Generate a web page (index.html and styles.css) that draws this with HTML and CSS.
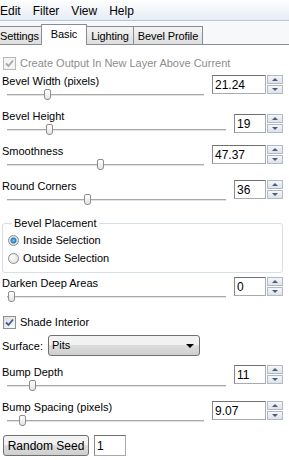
FILE: index.html
```html
<!DOCTYPE html>
<html lang="en">
<head>
  <meta charset="UTF-8" />
  <title>Bevel</title>
  <link rel="stylesheet" href="styles.css">
</head>
<body>
  <div class="menubar">
    <span>Edit</span>
    <span>Filter</span>
    <span>View</span>
    <span>Help</span>
  </div>

  <div class="tabs">
    <div class="tab t-settings">Settings</div>
    <div class="tab active t-basic">Basic</div>
    <div class="tab t-lighting">Lighting</div>
    <div class="tab t-profile">Bevel Profile</div>
  </div>

  <div class="panel">
    <div class="check-row disabled">
      <span class="box checked"><svg viewBox="0 0 9 9"><path d="M1 4.5 L3.5 7 L8 1.5" /></svg></span>
      Create Output In New Layer Above Current
    </div>

    <div class="field">
      <div class="field-main">
        <div class="label">Bevel Width (pixels)</div>
        <div class="track"><span class="thumb" style="left:37px"></span></div>
      </div>
      <div class="spin"><input class="num wide" value="21.24"><span class="arrows"><b class="up"></b><b class="down"></b></span></div>
    </div>

    <div class="field">
      <div class="field-main">
        <div class="label">Bevel Height</div>
        <div class="track"><span class="thumb" style="left:39px"></span></div>
      </div>
      <div class="spin low"><input class="num" value="19"><span class="arrows"><b class="up"></b><b class="down"></b></span></div>
    </div>

    <div class="field">
      <div class="field-main">
        <div class="label">Smoothness</div>
        <div class="track"><span class="thumb" style="left:90px"></span></div>
      </div>
      <div class="spin"><input class="num wide" value="47.37"><span class="arrows"><b class="up"></b><b class="down"></b></span></div>
    </div>

    <div class="field">
      <div class="field-main">
        <div class="label">Round Corners</div>
        <div class="track"><span class="thumb" style="left:77px"></span></div>
      </div>
      <div class="spin"><input class="num" value="36"><span class="arrows"><b class="up"></b><b class="down"></b></span></div>
    </div>

    <fieldset class="group">
      <legend>Bevel Placement</legend>
      <div class="radio-row"><span class="radio on"></span>Inside Selection</div>
      <div class="radio-row"><span class="radio"></span>Outside Selection</div>
    </fieldset>

    <div class="field darken">
      <div class="field-main">
        <div class="label">Darken Deep Areas</div>
        <div class="track"><span class="thumb" style="left:1px"></span></div>
      </div>
      <div class="spin"><input class="num" value="0"><span class="arrows"><b class="up"></b><b class="down"></b></span></div>
    </div>

    <div class="check-row shade">
      <span class="box checked"><svg viewBox="0 0 9 9"><path d="M1 4.5 L3.5 7 L8 1.5" /></svg></span>
      Shade Interior
    </div>

    <div class="surface-row">
      <span>Surface:</span>
      <div class="select">Pits<i class="caret"></i></div>
    </div>

    <div class="field bump">
      <div class="field-main">
        <div class="label">Bump Depth</div>
        <div class="track"><span class="thumb" style="left:22px"></span></div>
      </div>
      <div class="spin"><input class="num" value="11"><span class="arrows"><b class="up"></b><b class="down"></b></span></div>
    </div>

    <div class="field">
      <div class="field-main">
        <div class="label">Bump Spacing (pixels)</div>
        <div class="track"><span class="thumb" style="left:12px"></span></div>
      </div>
      <div class="spin"><input class="num wide" value="9.07"><span class="arrows"><b class="up"></b><b class="down"></b></span></div>
    </div>

    <div class="seed-row">
      <button class="btn">Random Seed</button>
      <input class="num seed" value="1">
    </div>
  </div>
</body>
</html>
```

FILE: styles.css
```css
body {
  margin: 0;
  width: 289px;
  height: 460px;
  overflow: hidden;
  font-family: 'Liberation Sans', Arial, sans-serif;
  font-size: 11px;
  color: #000;
  background: #fff;
}

.menubar {
  height: 19px;
  display: flex;
  align-items: center;
  gap: 12px;
  font-size: 12px;
  background: linear-gradient(#fdfefe, #e6ecf5);
  border-bottom: 1px solid #b9c3d2;
  padding-top: 1px;
}

.tabs {
  height: 23px;
  display: flex;
  align-items: flex-end;
  background: #f7f8f9;
  border-bottom: 1px solid #898c95;
}

.tab {
  height: 18px;
  line-height: 18px;
  text-align: center;
  border: 1px solid #898c95;
  border-bottom: none;
  background: linear-gradient(#f4f4f4, #dedede);
  margin-right: -1px;
  box-sizing: border-box;
  font-size: 11px;
  letter-spacing: -0.1px;
  white-space: nowrap;
}

.tab.active {
  height: 21px;
  line-height: 19px;
  background: #fff;
  margin-bottom: -1px;
  position: relative;
  z-index: 1;
}

.t-settings {
  width: 42px;
  border-left: none;
  text-align: left;
}

.t-basic { width: 46px; }
.t-lighting { width: 48px; }
.t-profile { width: 70px; }

.panel {
  padding: 11px 6px 0 1px;
}

.check-row {
  height: 14px;
  display: flex;
  align-items: center;
  gap: 4px;
  padding-left: 2px;
}

.check-row.disabled {
  color: #8d8d8d;
  margin-bottom: 4px;
}

.box {
  width: 11px;
  height: 11px;
  border: 1px solid #8e8f8f;
  background: linear-gradient(135deg, #dcdcdc, #fbfbfb);
  display: inline-flex;
  align-items: center;
  justify-content: center;
}

.box svg { width: 9px; height: 9px; }
.box path { fill: none; stroke: #3d5c9a; stroke-width: 1.8; }
.disabled .box { border-color: #b8b8b8; background: #f4f4f4; }
.disabled .box path { stroke: #a6a6a6; }

.field {
  height: 35px;
  display: flex;
  align-items: flex-start;
}

.field-main {
  flex: 1;
  padding-left: 1px;
}

.label {
  height: 14px;
  line-height: 14px;
}

.track {
  position: relative;
  height: 1px;
  margin: 6px 8px 0 5px;
  background: #a9a9a9;
  border-bottom: 1px solid #e3e3e3;
}

.thumb {
  position: absolute;
  top: -5px;
  width: 5px;
  height: 9px;
  border: 1px solid #8d8d8d;
  border-radius: 2px 2px 3px 3px;
  background: linear-gradient(#ffffff, #e4e4e4);
}

.spin {
  display: flex;
  gap: 1px;
  margin-top: 1px;
}

.spin.low { margin-top: 5px; }

.num {
  width: 32px;
  height: 19px;
  box-sizing: border-box;
  border: 1px solid #a7abb0;
  border-top-color: #707070;
  border-left-color: #8a8a8a;
  font-family: 'Liberation Sans', Arial, sans-serif;
  font-size: 12px;
  padding: 0 0 0 2px;
  margin: 0;
  outline: none;
}

.num.wide { width: 54px; }

.arrows {
  width: 16px;
  display: flex;
  flex-direction: column;
  gap: 1px;
}

.arrows b {
  flex: 1;
  border: 1px solid #b3b9c4;
  background: linear-gradient(#f4f6f9, #dde3ec);
  position: relative;
}

.arrows b::after {
  content: "";
  position: absolute;
  left: 4px;
  top: 2px;
  border-left: 3px solid transparent;
  border-right: 3px solid transparent;
}

.arrows .up::after { border-bottom: 3px solid #4d5a78; }
.arrows .down::after { border-top: 3px solid #4d5a78; }

.group {
  margin: 2px 0 3px 1px;
  padding: 1px 0 5px 5px;
  border: 1px solid #d5dfe5;
  border-radius: 3px;
  min-width: 0;
}

.group legend {
  padding: 0 2px;
  margin-left: 4px;
  line-height: 14px;
}

.radio-row {
  height: 18px;
  display: flex;
  align-items: center;
  gap: 4px;
}

.radio {
  width: 11px;
  height: 11px;
  border-radius: 50%;
  border: 1px solid #8e8f8f;
  background: radial-gradient(circle at 40% 35%, #ffffff, #d8d8d8);
  box-sizing: border-box;
}

.radio.on {
  background: radial-gradient(circle, #86c6e8 0, #2a77b8 2.5px, #dfe7ee 3.5px, #c9d2da 100%);
}

.darken { margin-bottom: 4px; }

.shade { margin-bottom: 6px; }

.surface-row {
  display: flex;
  align-items: center;
  gap: 5px;
  padding-left: 1px;
  margin-bottom: 9px;
}

.select {
  width: 152px;
  height: 21px;
  box-sizing: border-box;
  border: 1px solid #707070;
  border-radius: 3px;
  background: linear-gradient(#f2f2f2 45%, #dddddd 50%, #cfcfcf);
  line-height: 19px;
  padding-left: 3px;
  position: relative;
}

.caret {
  position: absolute;
  right: 5px;
  top: 8px;
  border-left: 4px solid transparent;
  border-right: 4px solid transparent;
  border-top: 4px solid #000;
}

.bump .spin { margin-top: 0; }

.seed-row {
  display: flex;
  gap: 5px;
  margin-top: 0;
  padding-left: 2px;
}

.btn {
  width: 86px;
  height: 21px;
  border: 1px solid #707070;
  border-radius: 3px;
  background: linear-gradient(#f2f2f2 45%, #dddddd 50%, #cfcfcf);
  font-family: 'Liberation Sans', Arial, sans-serif;
  font-size: 12px;
  padding: 0;
}

.num.seed { height: 21px; width: 32px; }
```
